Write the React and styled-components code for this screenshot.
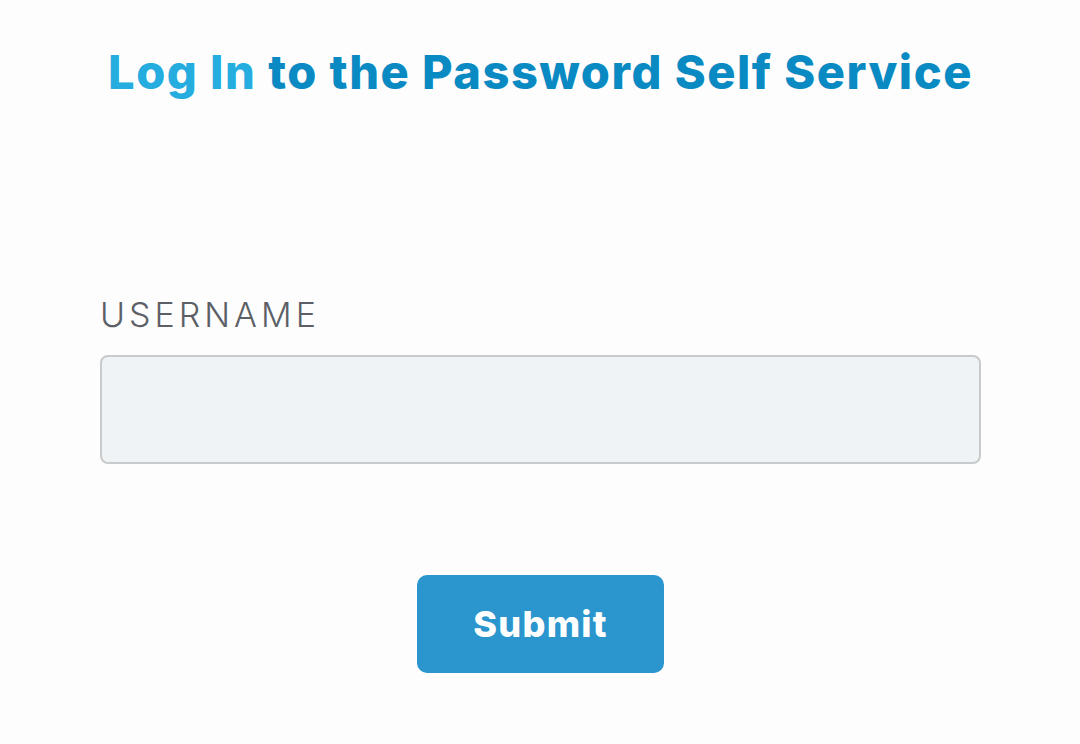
import React from "react";
import styled, { createGlobalStyle } from "styled-components";

const Global = createGlobalStyle`
  html, body { margin: 0; padding: 0; background: #fdfdfd; }
  body { font-family: "Inter", "Noto Sans", sans-serif; }
  * { box-sizing: border-box; }
`;

const Page = styled.main`
  width: 1080px;
  height: 744px;
  display: flex;
  flex-direction: column;
  padding: 44px 99px 0 100px;
  background: #fdfdfd;
`;

const Title = styled.h1`
  margin: 0;
  text-align: center;
  font-family: "Inter", sans-serif;
  font-weight: 800;
  font-size: 47px;
  line-height: 56px;
  letter-spacing: 1.5px;
  color: #0a8ac2;
  white-space: nowrap;
`;

const Accent = styled.span`
  color: #25ade0;
`;

const Form = styled.form`
  display: flex;
  flex-direction: column;
  margin-top: 193px;
`;

const Label = styled.label`
  font-family: "Inter", sans-serif;
  font-weight: 300;
  font-size: 34px;
  line-height: 44px;
  letter-spacing: 4px;
  color: #5c6066;
`;

const Input = styled.input`
  margin-top: 18px;
  height: 109px;
  width: 100%;
  border: 2px solid #c9cacb;
  border-radius: 8px;
  background: #eff3f5;
  font-size: 32px;
  padding: 0 20px;
  outline: none;
`;

const Actions = styled.div`
  display: flex;
  justify-content: center;
  margin-top: 111px;
`;

const Button = styled.button`
  width: 247px;
  height: 98px;
  border: none;
  border-radius: 10px;
  background: #2b96cd;
  color: #ffffff;
  font-family: "Inter", sans-serif;
  font-weight: 800;
  font-size: 36px;
  letter-spacing: 1.3px;
  cursor: pointer;
`;

export default function App() {
  return (
    <>
      <Global />
      <Page>
        <Title>
          <Accent>Log In</Accent> to the Password Self Service
        </Title>
        <Form onSubmit={(e) => e.preventDefault()}>
          <Label htmlFor="username">USERNAME</Label>
          <Input id="username" type="text" />
          <Actions>
            <Button type="submit">Submit</Button>
          </Actions>
        </Form>
      </Page>
    </>
  );
}
